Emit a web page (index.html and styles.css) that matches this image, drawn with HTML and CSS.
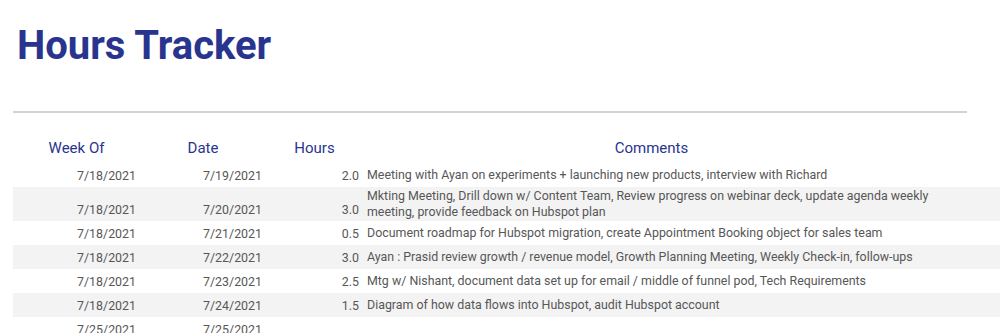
FILE: index.html
```html
<!DOCTYPE html>
<html lang="en">
<head>
    <meta charset="UTF-8">
    <title>Hours Tracker</title>
    <link rel="stylesheet" href="styles.css">
</head>
<body>
    <h1 class="title">Hours Tracker</h1>
    <div class="rule"></div>
    <div class="sheet">
        <table class="hours">
            <colgroup>
                <col class="col-week">
                <col class="col-date">
                <col class="col-hours">
                <col class="col-comments">
                <col class="col-pad">
            </colgroup>
            <thead>
                <tr>
                    <th>Week Of</th>
                    <th>Date</th>
                    <th>Hours</th>
                    <th>Comments</th>
                    <th></th>
                </tr>
            </thead>
            <tbody>
                <tr>
                    <td class="num">7/18/2021</td>
                    <td class="num">7/19/2021</td>
                    <td class="num">2.0</td>
                    <td class="text">Meeting with Ayan on experiments + launching new products, interview with Richard</td>
                    <td></td>
                </tr>
                <tr class="alt">
                    <td class="num">7/18/2021</td>
                    <td class="num">7/20/2021</td>
                    <td class="num">3.0</td>
                    <td class="text">Mkting Meeting, Drill down w/ Content Team, Review progress on webinar deck, update agenda weekly meeting, provide feedback on Hubspot plan</td>
                    <td></td>
                </tr>
                <tr>
                    <td class="num">7/18/2021</td>
                    <td class="num">7/21/2021</td>
                    <td class="num">0.5</td>
                    <td class="text">Document roadmap for Hubspot migration, create Appointment Booking object for sales team</td>
                    <td></td>
                </tr>
                <tr class="alt">
                    <td class="num">7/18/2021</td>
                    <td class="num">7/22/2021</td>
                    <td class="num">3.0</td>
                    <td class="text">Ayan : Prasid review growth / revenue model, Growth Planning Meeting, Weekly Check-in, follow-ups</td>
                    <td></td>
                </tr>
                <tr>
                    <td class="num">7/18/2021</td>
                    <td class="num">7/23/2021</td>
                    <td class="num">2.5</td>
                    <td class="text">Mtg w/ Nishant, document data set up for email / middle of funnel pod, Tech Requirements</td>
                    <td></td>
                </tr>
                <tr class="alt">
                    <td class="num">7/18/2021</td>
                    <td class="num">7/24/2021</td>
                    <td class="num">1.5</td>
                    <td class="text">Diagram of how data flows into Hubspot, audit Hubspot account</td>
                    <td></td>
                </tr>
                <tr>
                    <td class="num">7/25/2021</td>
                    <td class="num">7/25/2021</td>
                    <td class="num"></td>
                    <td class="text"></td>
                    <td></td>
                </tr>
            </tbody>
        </table>
    </div>
</body>
</html>
```

FILE: styles.css
```css
:root {
    --title-color: #29348f;
    --text-color: #575757;
    --stripe-color: #f3f3f3;
}
body {
    margin: 0;
    font-family: Roboto, "Liberation Sans", sans-serif;
    background: #ffffff;
    overflow: hidden;
}
.title {
    margin: 0;
    padding: 22px 0 0 17px;
    font-size: 40px;
    line-height: 48px;
    font-weight: bold;
    color: var(--title-color);
}
.rule {
    margin: 41px 0 0 13px;
    width: 954px;
    border-top: 2px solid #d3d3d3;
}
.sheet {
    padding: 15px 0 0 13px;
}
.hours {
    border-collapse: collapse;
    table-layout: fixed;
    width: 1000px;
}
.col-week { width: 127px; }
.col-date { width: 126px; }
.col-hours { width: 97px; }
.col-comments { width: 577px; }
.hours th {
    height: 29px;
    padding: 0 0 6px;
    vertical-align: bottom;
    font-size: 15px;
    line-height: 18px;
    font-weight: normal;
    color: var(--title-color);
    text-align: center;
}
.hours td {
    height: 20px;
    padding: 1px 4px 3px;
    font-size: 12.4px;
    line-height: 16px;
    color: var(--text-color);
}
.hours td.num {
    text-align: right;
    vertical-align: bottom;
}
.hours td.text {
    vertical-align: middle;
    padding: 1px 4px;
}
.hours tr.alt td {
    background: var(--stripe-color);
}
```
